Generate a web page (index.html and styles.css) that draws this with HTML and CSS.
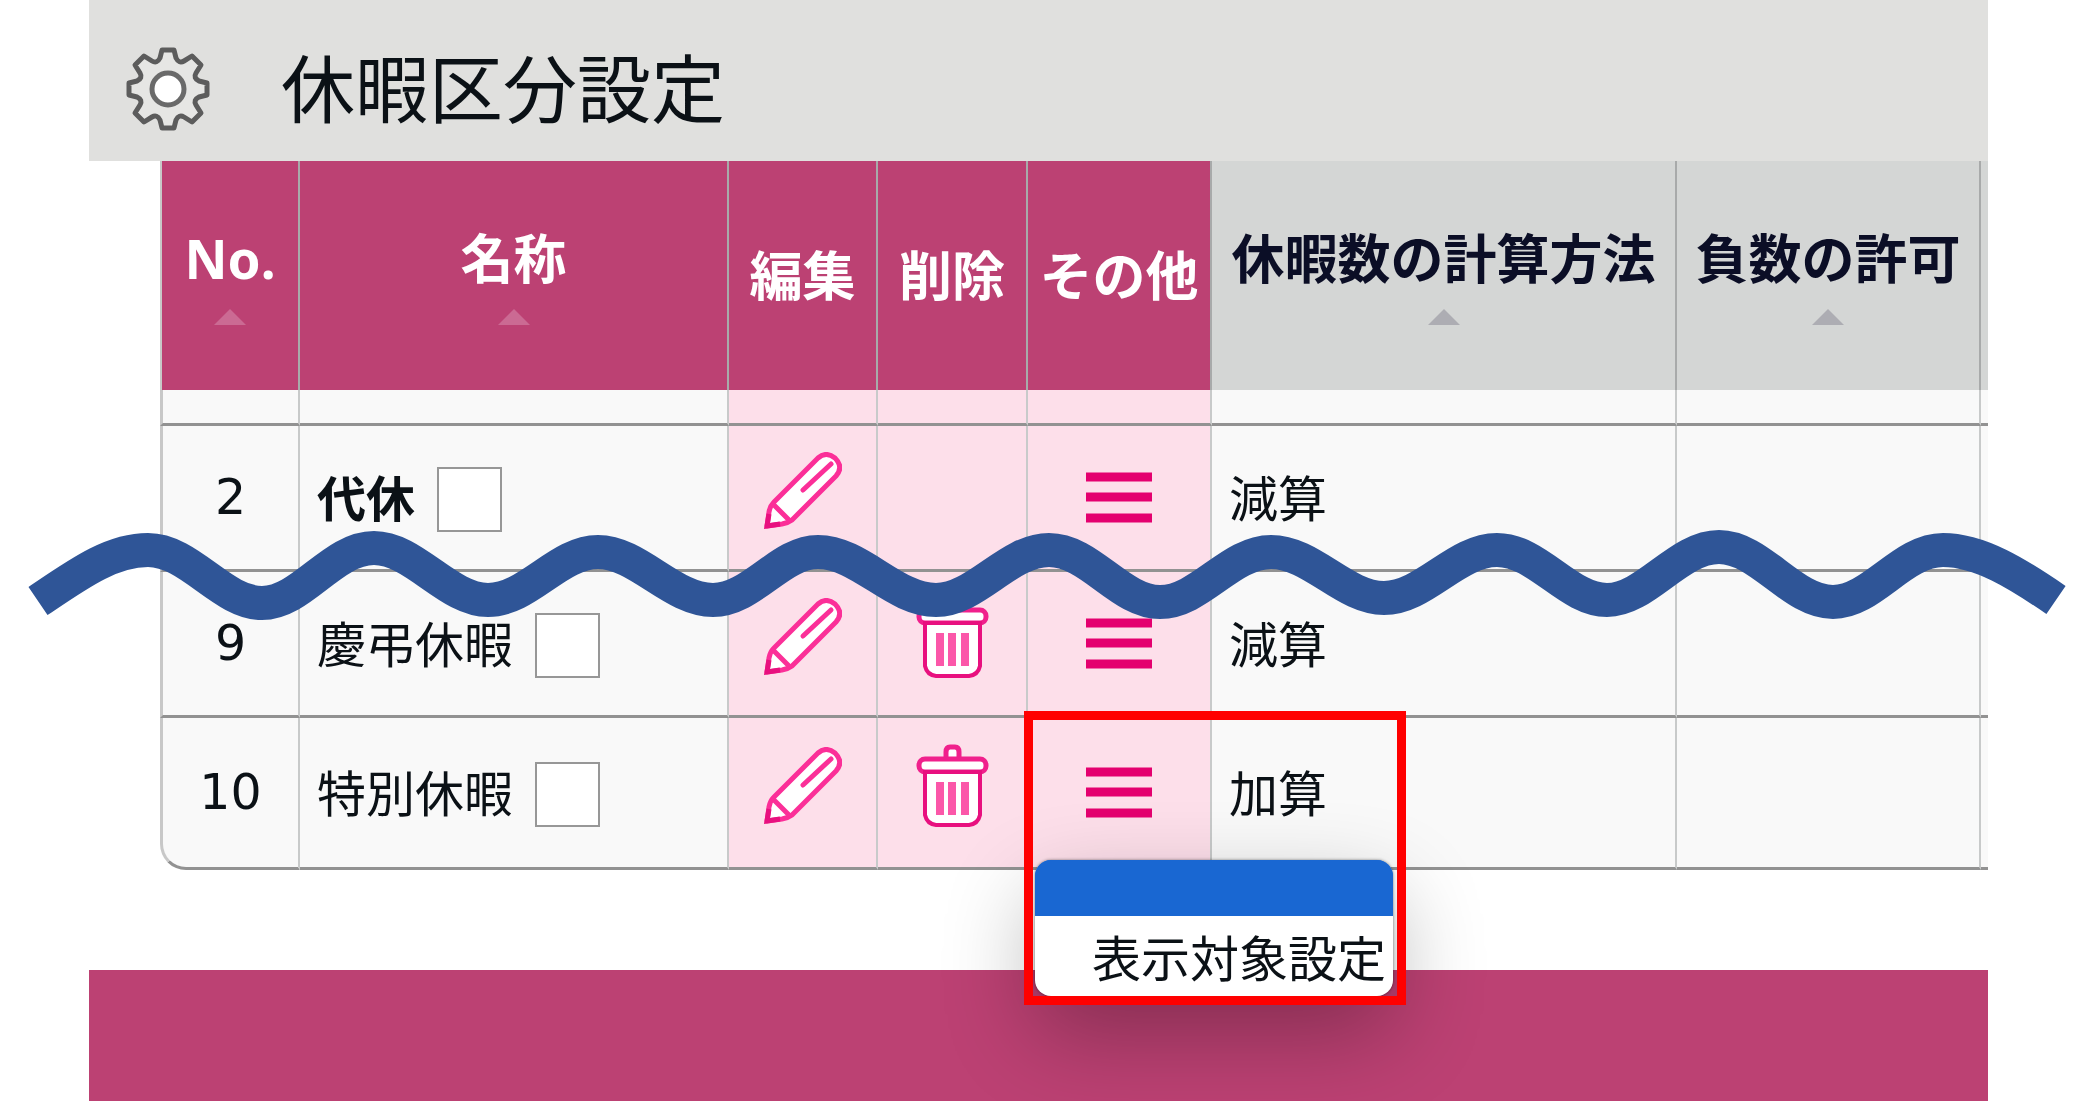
FILE: index.html
```html
<!DOCTYPE html>
<html lang="ja">
<head>
    <meta charset="UTF-8">
    <meta name="viewport" content="width=device-width, initial-scale=1.0">
    <title>休暇区分設定</title>
    <link rel="stylesheet" href="styles.css">
</head>
<body>
    <!-- shared icons -->
    <svg class="sprite" aria-hidden="true">
        <symbol id="icon-pencil" viewBox="0 0 78 77">
            <path d="M3 74 L5 60 Q6 54 10 50 L54 6 Q62 -1 71 6 Q80 15 72 24 L28 68 Q24 71 18 72 Z" fill="#fff" stroke="#fb2f98" stroke-width="5" stroke-linejoin="round"/>
            <path d="M9 52 L25 68 M67 12 L39 38" fill="none" stroke="#fb2f98" stroke-width="5" stroke-linecap="round"/>
            <path d="M5 62 L3 74 L16 72" fill="none" stroke="#e8107f" stroke-width="5"/>
        </symbol>
        <symbol id="icon-trash" viewBox="0 0 73 84">
            <path d="M30 15 V8 Q30 3 34 3 H39 Q43 3 43 8 V15" fill="#fff" stroke="#f0208c" stroke-width="5"/>
            <rect x="3" y="15" width="67" height="13" rx="6" fill="#fff" stroke="#f0208c" stroke-width="5"/>
            <path d="M9 28 H64 V71 Q62 80 53 81 H20 Q11 80 9 71 Z" fill="#fff" stroke="#e8107f" stroke-width="4"/>
            <path d="M24 38 V71 M36 38 V71 M49 38 V71" stroke="#fb57a9" stroke-width="8"/>
        </symbol>
        <symbol id="icon-menu" viewBox="0 0 66 51">
            <path d="M0 5 H66 M0 25 H66 M0 46 H66" stroke="#e4006f" stroke-width="9"/>
        </symbol>
    </svg>

    <div class="page">
        <header class="page-header">
            <svg class="gear" viewBox="-42 -42 84 84" aria-hidden="true">
                <path d="M-6 -39 L6 -39 L8 -31 Q11 -25 16 -28 L24 -33 L33 -24 L28 -16 Q25 -11 31 -8 L39 -6 L39 6 L31 8 Q25 11 28 16 L33 24 L24 33 L16 28 Q11 25 8 31 L6 39 L-6 39 L-8 31 Q-11 25 -16 28 L-24 33 L-33 24 L-28 16 Q-25 11 -31 8 L-39 6 L-39 -6 L-31 -8 Q-25 -11 -28 -16 L-33 -24 L-24 -33 L-16 -28 Q-11 -25 -8 -31 Z" fill="#e6e6e4" stroke="#5c5c5c" stroke-width="5" stroke-linejoin="round"/>
                <circle r="16" fill="#fff" stroke="#6a6a6a" stroke-width="5"/>
            </svg>
            <h1>休暇区分設定</h1>
        </header>

        <main>
            <table class="leave-table">
                <colgroup>
                    <col class="col-no">
                    <col class="col-name">
                    <col class="col-edit">
                    <col class="col-delete">
                    <col class="col-other">
                    <col class="col-method">
                    <col class="col-minus">
                    <col>
                </colgroup>
                <thead>
                    <tr>
                        <th class="main"><span class="sortable">No.</span></th>
                        <th class="main"><span class="sortable">名称</span></th>
                        <th class="main">編集</th>
                        <th class="main">削除</th>
                        <th class="main">その他</th>
                        <th><span class="sortable">休暇数の計算方法</span></th>
                        <th><span class="sortable">負数の許可</span></th>
                        <th></th>
                    </tr>
                </thead>
                <tbody>
                    <tr class="partial">
                        <td></td><td></td><td class="action"></td><td class="action"></td><td class="action"></td><td></td><td></td><td></td>
                    </tr>
                    <tr>
                        <td class="no">2</td>
                        <td><label class="name"><b>代休</b><input type="checkbox"></label></td>
                        <td class="action"><button class="raised" aria-label="編集"><svg class="pencil"><use href="#icon-pencil"/></svg></button></td>
                        <td class="action"></td>
                        <td class="action"><button aria-label="その他"><svg class="menu-icon"><use href="#icon-menu"/></svg></button></td>
                        <td>減算</td>
                        <td></td>
                        <td></td>
                    </tr>
                    <tr>
                        <td class="no">9</td>
                        <td><label class="name">慶弔休暇<input type="checkbox"></label></td>
                        <td class="action"><button class="raised" aria-label="編集"><svg class="pencil"><use href="#icon-pencil"/></svg></button></td>
                        <td class="action"><button class="raised" aria-label="削除"><svg class="trash"><use href="#icon-trash"/></svg></button></td>
                        <td class="action"><button aria-label="その他"><svg class="menu-icon"><use href="#icon-menu"/></svg></button></td>
                        <td>減算</td>
                        <td></td>
                        <td></td>
                    </tr>
                    <tr class="bottom">
                        <td class="no">10</td>
                        <td><label class="name">特別休暇<input type="checkbox"></label></td>
                        <td class="action"><button class="raised" aria-label="編集"><svg class="pencil"><use href="#icon-pencil"/></svg></button></td>
                        <td class="action"><button class="raised" aria-label="削除"><svg class="trash"><use href="#icon-trash"/></svg></button></td>
                        <td class="action opened">
                            <button aria-label="その他"><svg class="menu-icon"><use href="#icon-menu"/></svg></button>
                            <select class="other-menu" size="2" aria-label="その他">
                                <option value="" selected></option>
                                <option value="target">表示対象設定</option>
                            </select>
                            <div class="highlight"></div>
                        </td>
                        <td>加算</td>
                        <td></td>
                        <td></td>
                    </tr>
                </tbody>
            </table>
        </main>

        <footer class="page-footer"></footer>
    </div>

    <!-- rows between 2 and 9 are left out -->
    <svg class="wave" viewBox="0 0 2078 120" preserveAspectRatio="none" aria-hidden="true">
        <path d="M38 81 C78 54 111 30 148 30 C190 30 222 83 262 83 C302 83 332 28 374 28 C414 28 448 80 488 80 C528 80 558 32 598 32 C638 32 672 80 713 80 C752 80 780 32 818 32 C860 32 894 80 936 80 C976 80 1008 30 1049 30 C1090 30 1120 82 1160 82 C1200 82 1230 32 1271 32 C1312 32 1344 78 1384 78 C1424 78 1456 30 1497 30 C1538 30 1568 80 1607 80 C1646 80 1678 27 1719 27 C1760 27 1792 82 1833 82 C1872 82 1902 30 1943 30 C1980 30 2018 54 2056 80" fill="none" stroke="#2f5597" stroke-width="34"/>
    </svg>
</body>
</html>
```
FILE: styles.css
```css
* {
    box-sizing: border-box;
}
body {
    margin: 0;
    position: relative;
    background-color: #fff;
    color: #0b1116;
    font-family: "Noto Sans", "Noto Sans CJK JP", sans-serif;
    font-size: 49px;
    line-height: 64px;
}
.sprite {
    position: absolute;
    width: 0;
    height: 0;
}
.page {
    display: flex;
    flex-direction: column;
    min-height: 100vh;
    margin: 0 90px 0 89px;
}
.page-header {
    display: flex;
    align-items: center;
    gap: 71px;
    height: 161px;
    padding: 16px 37px 0;
    background-color: #e0e0de;
}
.gear {
    width: 84px;
    height: 84px;
}
h1 {
    margin: 0;
    font-size: 74px;
    font-weight: normal;
}
main {
    padding: 0 0 100px 71px;
}

/* table */
.leave-table {
    width: 100%;
    table-layout: fixed;
    border-collapse: separate;
    border-spacing: 0;
}
.col-no { width: 140px; }
.col-name { width: 429px; }
.col-edit { width: 149px; }
.col-delete { width: 150px; }
.col-other { width: 184px; }
.col-method { width: 465px; }
.col-minus { width: 304px; }
th {
    height: 229px;
    padding: 0;
    background-color: #d4d6d5;
    border-right: 2px solid #a8aaaa;
    color: #0b0e26;
    font-size: 53px;
    white-space: nowrap;
}
th.main {
    background-color: #bc4173;
    color: #fff;
}
th:first-child {
    border-left: 2px solid #c8c8c8;
}
.sortable {
    display: flex;
    flex-direction: column;
    align-items: center;
    gap: 18px;
}
.sortable::after {
    content: "";
    border: 16px solid transparent;
    border-top: 0;
    border-bottom-color: #adadb3;
}
.main .sortable::after {
    border-bottom-color: #cb6a93;
}
td {
    height: 146px;
    padding: 0 17px;
    background-color: #f9f9f9;
    border-right: 2px solid #c8caca;
    border-bottom: 3px solid #929292;
}
td:first-child {
    border-left: 3px solid #c8c8c8;
}
th:last-child,
td:last-child {
    border-right: 0;
    padding: 0;
}
.partial td {
    height: 36px;
}
.bottom td {
    height: 152px;
}
.bottom td:first-child {
    border-bottom-left-radius: 26px;
}
.no {
    font-family: "DejaVu Sans", sans-serif;
    text-align: center;
}
.name {
    display: flex;
    align-items: center;
    gap: 22px;
}
input[type="checkbox"] {
    appearance: none;
    width: 65px;
    height: 65px;
    margin: 4px 0 0;
    background-color: #fff;
    border: 2px solid #979797;
}
td.action {
    padding: 0;
    background-color: #fddfea;
    text-align: center;
}
.action button {
    display: flex;
    justify-content: center;
    width: 100%;
    padding: 0;
    border: 0;
    background: none;
    cursor: pointer;
}
.action .raised {
    padding-bottom: 14px;
}
.pencil {
    width: 78px;
    height: 77px;
}
.trash {
    width: 73px;
    height: 84px;
}
.menu-icon {
    width: 66px;
    height: 51px;
}

/* opened menu */
.opened {
    position: relative;
}
.other-menu {
    position: absolute;
    top: 142px;
    left: 7px;
    width: 358px;
    height: 136px;
    padding: 0;
    border: 0;
    border-radius: 16px;
    background-color: #fff;
    box-shadow: 0 0 3px rgba(0, 0, 0, 0.5), 0 36px 90px rgba(0, 0, 0, 0.3);
    color: #0b1116;
    font-family: inherit;
    font-size: 49px;
    line-height: 64px;
    overflow: hidden;
    outline: none;
}
.other-menu option {
    height: 80px;
    padding: 4px 0 12px 57px;
}
.other-menu option:checked {
    height: 56px;
    min-height: 56px;
    padding: 0;
    background: #1967d2 linear-gradient(#1967d2, #1967d2);
}
.highlight {
    position: absolute;
    top: -7px;
    left: -4px;
    width: 382px;
    height: 294px;
    border: 9px solid #f00;
    pointer-events: none;
}
.page-footer {
    flex: 1;
    background-color: #bc4173;
}
.wave {
    position: absolute;
    top: 520px;
    left: 0;
    width: 100%;
    height: 120px;
    pointer-events: none;
}
```
